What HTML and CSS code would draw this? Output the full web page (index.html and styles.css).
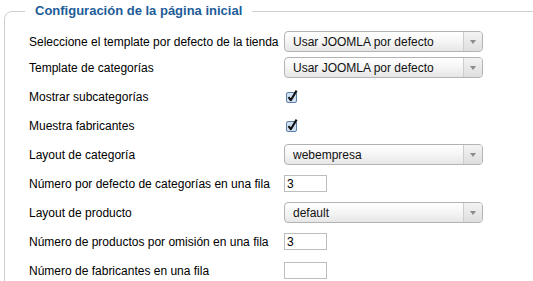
FILE: index.html
```html
<!DOCTYPE html>
<html lang="es">
<head>
    <meta charset="UTF-8">
    <meta name="viewport" content="width=device-width, initial-scale=1.0">
    <title>Configuración</title>
    <link rel="stylesheet" href="styles.css">
</head>
<body>
    <fieldset class="config">
        <legend>Configuración de la página inicial</legend>

        <div class="row row-first">
            <label for="tpl">Seleccione el template por defecto de la tienda</label>
            <div class="select">
                <select id="tpl"><option>Usar JOOMLA por defecto</option></select>
                <span class="select-arrow"></span>
            </div>
        </div>
        <div class="row">
            <label for="tplcat">Template de categorías</label>
            <div class="select">
                <select id="tplcat"><option>Usar JOOMLA por defecto</option></select>
                <span class="select-arrow"></span>
            </div>
        </div>
        <div class="row">
            <label for="subcat">Mostrar subcategorías</label>
            <span class="check" id="subcat">
                <svg width="14" height="15" viewBox="0 0 14 15">
                    <rect x="1.5" y="3.5" width="10" height="10" rx="1.5" fill="#cfe0f3" stroke="#5f7fa6"/>
                    <path d="M3.5 8.2 L5.8 11.2 L11.6 1.6" fill="none" stroke="#111" stroke-width="2.1" stroke-linejoin="round"/>
                </svg>
            </span>
        </div>
        <div class="row">
            <label for="fabr">Muestra fabricantes</label>
            <span class="check" id="fabr">
                <svg width="14" height="15" viewBox="0 0 14 15">
                    <rect x="1.5" y="3.5" width="10" height="10" rx="1.5" fill="#cfe0f3" stroke="#5f7fa6"/>
                    <path d="M3.5 8.2 L5.8 11.2 L11.6 1.6" fill="none" stroke="#111" stroke-width="2.1" stroke-linejoin="round"/>
                </svg>
            </span>
        </div>
        <div class="row">
            <label for="laycat">Layout de categoría</label>
            <div class="select">
                <select id="laycat"><option>webempresa</option></select>
                <span class="select-arrow"></span>
            </div>
        </div>
        <div class="row">
            <label for="numcat">Número por defecto de categorías en una fila</label>
            <input type="text" id="numcat" value="3">
        </div>
        <div class="row">
            <label for="layprod">Layout de producto</label>
            <div class="select">
                <select id="layprod"><option>default</option></select>
                <span class="select-arrow"></span>
            </div>
        </div>
        <div class="row">
            <label for="numprod">Número de productos por omisión en una fila</label>
            <input type="text" id="numprod" value="3">
        </div>
        <div class="row">
            <label for="numfab">Número de fabricantes en una fila</label>
            <input type="text" id="numfab" value="">
        </div>
    </fieldset>
</body>
</html>
```

FILE: styles.css
```css
body {
    margin: 0;
    font-family: "Liberation Sans", Arial, sans-serif;
    font-size: 12px;
    color: #000;
    background-color: #fff;
    overflow: hidden;
}
.config {
    margin: 2px 0 0 4px;
    width: 600px;
    padding: 10px 0 20px 24px;
    border: 1px solid #cfcfcf;
    border-radius: 8px;
}
.config legend {
    margin-left: -4px;
    padding: 0 10px;
    font-size: 13px;
    line-height: 18px;
    font-weight: bold;
    color: #1d5c98;
}
.row {
    display: flex;
    align-items: center;
    height: 29px;
}
.row-first {
    height: 23px;
}
.row label {
    width: 255px;
    flex: none;
    white-space: nowrap;
}
.select {
    position: relative;
    width: 199px;
    height: 21px;
}
.select select {
    -webkit-appearance: none;
    appearance: none;
    width: 100%;
    height: 100%;
    margin: 0;
    padding: 0 0 0 8px;
    border: 1px solid #b3b3b3;
    border-radius: 4px;
    background: linear-gradient(#ffffff, #f4f4f4 55%, #e6e6e6);
    font-family: "Liberation Sans", Arial, sans-serif;
    font-size: 12px;
    color: #111;
}
.select-arrow {
    position: absolute;
    top: 1px;
    right: 1px;
    bottom: 1px;
    width: 18px;
    border-left: 1px solid #cdcdcd;
    border-radius: 0 3px 3px 0;
    background: linear-gradient(#f3f3f3, #dedede);
    pointer-events: none;
}
.select-arrow::after {
    content: "";
    position: absolute;
    left: 6px;
    top: 8px;
    border-left: 3px solid transparent;
    border-right: 3px solid transparent;
    border-top: 4px solid #8a8a8a;
}
.check {
    display: block;
    margin-left: 1px;
    height: 15px;
}
.check svg {
    display: block;
}
input[type="text"] {
    width: 43px;
    height: 17px;
    box-sizing: border-box;
    margin: 0;
    padding: 0 2px;
    border: 1px solid #bdbdbd;
    font-family: "Liberation Sans", Arial, sans-serif;
    font-size: 12px;
    color: #000;
}
```
